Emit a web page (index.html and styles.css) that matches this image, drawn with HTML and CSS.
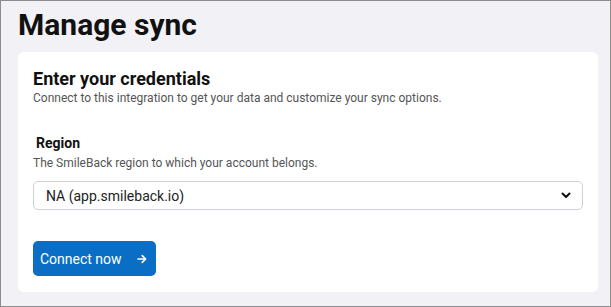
FILE: index.html
```html
<!DOCTYPE html>
<html lang="en">
<head>
    <meta charset="UTF-8">
    <meta name="viewport" content="width=device-width, initial-scale=1.0">
    <title>Manage sync</title>
    <link rel="stylesheet" href="styles.css">
</head>
<body>
    <div class="frame">
        <h1>Manage sync</h1>
        <div class="card">
            <h2>Enter your credentials</h2>
            <p class="hint">Connect to this integration to get your data and customize your sync options.</p>

            <div class="field">
                <label for="region">Region</label>
                <p class="hint">The SmileBack region to which your account belongs.</p>
                <div class="select-wrap">
                    <select id="region" name="region">
                        <option>NA (app.smileback.io)</option>
                        <option>EU (app.smileback.eu)</option>
                    </select>
                    <svg class="chevron" width="10" height="7" viewBox="0 0 10 7">
                        <path d="M1.5 1.5 5 5 8.5 1.5" fill="none" stroke="#111" stroke-width="2" stroke-linecap="round" stroke-linejoin="round"/>
                    </svg>
                </div>
            </div>

            <button type="button" class="connect">
                Connect now
                <svg width="10" height="10" viewBox="0 0 10 10">
                    <path d="M1 5h7.5M5.2 1.6 8.6 5 5.2 8.4" fill="none" stroke="#fff" stroke-width="1.6" stroke-linecap="round" stroke-linejoin="round"/>
                </svg>
            </button>
        </div>
    </div>
</body>
</html>
```

FILE: styles.css
```css
* {
    margin: 0;
    padding: 0;
    box-sizing: border-box;
}

body {
    font-family: Roboto, 'Liberation Sans', sans-serif;
    color: #111;
}

.frame {
    width: 611px;
    height: 307px;
    border: 1px solid #8c8c8c;
    background-color: #f2f1f6;
    padding: 6px 12px 0 17px;
}

h1 {
    font-size: 30px;
    font-weight: 700;
    line-height: 36px;
    margin-bottom: 9px;
    color: #111;
}

.card {
    background-color: #fff;
    border-radius: 6px;
    padding: 16px 15px 15px 15px;
    height: 240px;
}

h2 {
    font-size: 18px;
    font-weight: 700;
    line-height: 22px;
}

.hint {
    font-size: 12px;
    line-height: 16px;
    color: #555;
}

.field {
    margin-top: 27px;
}

label {
    display: block;
    font-size: 14px;
    font-weight: 700;
    line-height: 20px;
    padding-left: 3px;
    margin-bottom: 2px;
}

.select-wrap {
    position: relative;
    margin-top: 10px;
}

select {
    appearance: none;
    width: 100%;
    height: 29px;
    border: 1px solid #cfd3d9;
    border-radius: 5px;
    background-color: #fff;
    padding: 0 30px 0 12px;
    font-family: inherit;
    font-size: 14px;
    color: #222;
}

.chevron {
    position: absolute;
    right: 12px;
    top: 11px;
    pointer-events: none;
}

.connect {
    display: flex;
    align-items: center;
    gap: 15px;
    margin-top: 31px;
    height: 35px;
    padding: 0 9px 0 7px;
    background-color: #0a6fc4;
    color: #fff;
    border: none;
    border-radius: 5px;
    font-family: inherit;
    font-size: 14px;
    cursor: pointer;
}

.connect:hover {
    background-color: #085ea8;
}
```
